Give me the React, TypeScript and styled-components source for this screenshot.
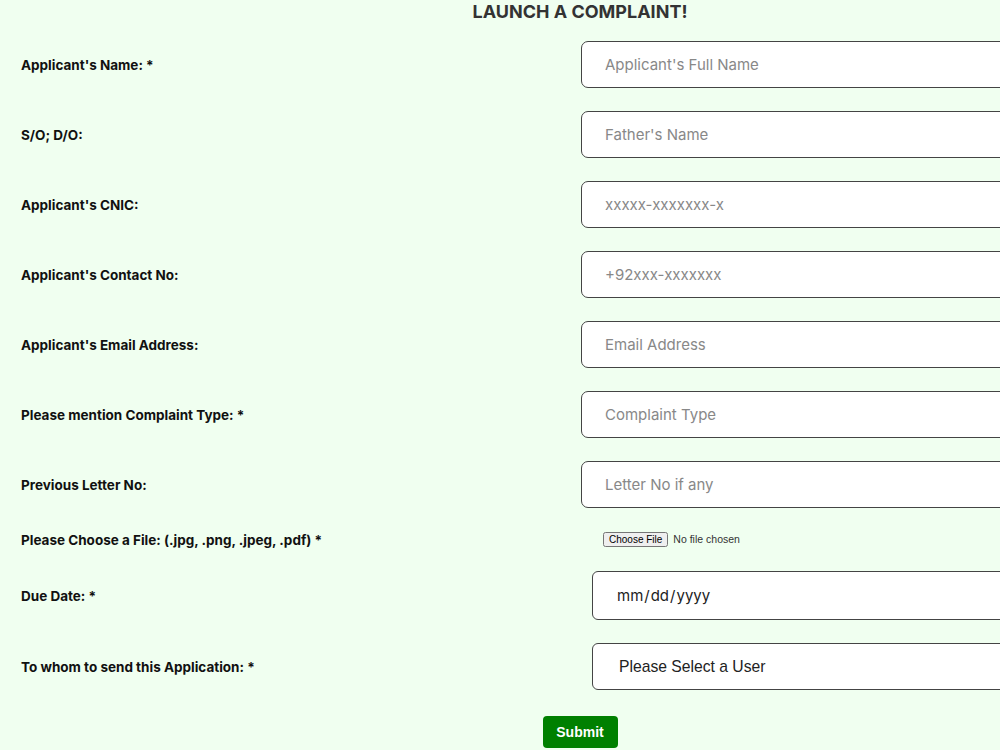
import React from "react";
import styled, { createGlobalStyle } from "styled-components";

const GlobalStyle = createGlobalStyle`
  html, body {
    margin: 0;
    padding: 0;
    background: #f0fff0;
    overflow: hidden;
  }
  body {
    font-family: Inter, "Liberation Sans", sans-serif;
  }
`;

const Page = styled.div`
  width: 1160px;
  padding: 0 0 0 21px;
  box-sizing: border-box;
`;

const Heading = styled.h2`
  margin: 0;
  padding-top: 1px;
  height: 41px;
  box-sizing: border-box;
  text-align: center;
  font-size: 18px;
  line-height: 22px;
  font-weight: 700;
  color: #333;
  padding-right: 21px;
`;

const Form = styled.form`
  display: grid;
  grid-template-columns: 560px 1fr;
  row-gap: 23px;
  align-items: center;
`;

const Label = styled.label`
  font-size: 13.5px;
  font-weight: 700;
  color: #111;
`;

const TextInput = styled.input`
  width: 100%;
  height: 47px;
  box-sizing: border-box;
  border: 1px solid #444;
  border-radius: 7px;
  background: #fff;
  padding: 0 23px;
  font-family: Inter, "Liberation Sans", sans-serif;
  font-size: 15px;
  color: #222;
  outline: none;
  &::placeholder {
    color: #888;
  }
`;

const FileCell = styled.div`
  display: flex;
  align-items: center;
  height: 17px;
`;

const FileField = styled.input`
  margin-left: 22px;
  font-family: "Liberation Sans", sans-serif;
  font-size: 10.5px;
  color: #333;
  &::file-selector-button {
    font-size: 10px;
    padding: 0 4px;
    margin-right: 5px;
  }
`;

const DateInput = styled(TextInput)`
  margin-left: 11px;
  width: calc(100% - 11px);
  height: 49px;
  border-radius: 6px;
  font-size: 15px;
  color: #222;
`;

const UserSelect = styled.select`
  margin-left: 11px;
  width: calc(100% - 11px);
  height: 47px;
  box-sizing: border-box;
  border: 1px solid #444;
  border-radius: 6px;
  background: #fff;
  padding: 0 26px;
  font-family: "Liberation Sans", sans-serif;
  font-size: 15.7px;
  color: #222;
  appearance: none;
`;

const SubmitRow = styled.div`
  display: flex;
  justify-content: center;
  padding: 26px 21px 0 0;
`;

const SubmitButton = styled.button`
  width: 75px;
  height: 32px;
  border: none;
  border-radius: 4px;
  background: #008000;
  color: #fff;
  font-family: "Liberation Sans", sans-serif;
  font-weight: 700;
  font-size: 14px;
  cursor: pointer;
`;

const textFields = [
  { label: "Applicant's Name: *", placeholder: "Applicant's Full Name" },
  { label: "S/O; D/O:", placeholder: "Father's Name" },
  { label: "Applicant's CNIC:", placeholder: "xxxxx-xxxxxxx-x" },
  { label: "Applicant's Contact No:", placeholder: "+92xxx-xxxxxxx" },
  { label: "Applicant's Email Address:", placeholder: "Email Address" },
  { label: "Please mention Complaint Type: *", placeholder: "Complaint Type" },
  { label: "Previous Letter No:", placeholder: "Letter No if any" },
];

export default function App() {
  return (
    <>
      <GlobalStyle />
      <Page>
        <Heading>LAUNCH A COMPLAINT!</Heading>
        <Form onSubmit={(e) => e.preventDefault()}>
          {textFields.map((f) => (
            <React.Fragment key={f.label}>
              <Label>{f.label}</Label>
              <TextInput type="text" placeholder={f.placeholder} />
            </React.Fragment>
          ))}
          <Label>Please Choose a File: (.jpg, .png, .jpeg, .pdf) *</Label>
          <FileCell>
            <FileField type="file" accept=".jpg,.png,.jpeg,.pdf" />
          </FileCell>
          <Label>Due Date: *</Label>
          <DateInput type="date" />
          <Label>To whom to send this Application: *</Label>
          <UserSelect defaultValue="">
            <option value="">Please Select a User</option>
          </UserSelect>
        </Form>
        <SubmitRow>
          <SubmitButton type="submit">Submit</SubmitButton>
        </SubmitRow>
      </Page>
    </>
  );
}
